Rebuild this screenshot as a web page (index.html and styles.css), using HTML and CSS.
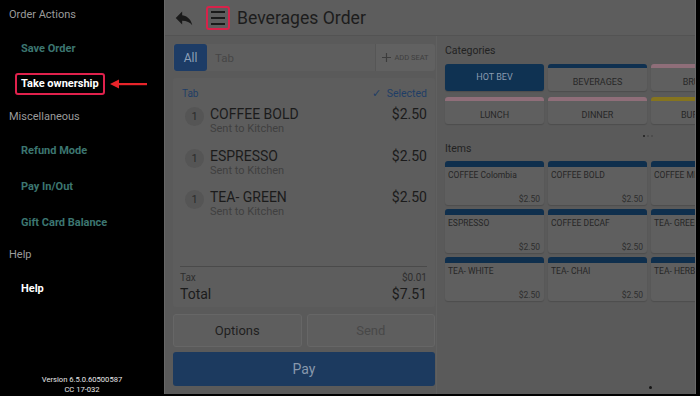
FILE: index.html
```html
<!DOCTYPE html>
<html>
<head>
<meta charset="utf-8">
<link rel="stylesheet" href="styles.css">
</head>
<body>
<div class="screen">
  <aside class="sidebar">
    <div class="sec">Order Actions</div>
    <div class="item teal">Save Order</div>
    <div class="item white">
      <span class="boxed">Take ownership</span>
      <svg class="arrow" width="37" height="10" viewBox="0 0 37 10"><path d="M0 5 L9 0.5 L9 9.5 Z" fill="#e8242a"/><rect x="8" y="4" width="29" height="2.2" fill="#e8242a"/></svg>
    </div>
    <div class="sec">Miscellaneous</div>
    <div class="item teal">Refund Mode</div>
    <div class="item teal">Pay In/Out</div>
    <div class="item teal">Gift Card Balance</div>
    <div class="sec">Help</div>
    <div class="item white">Help</div>
    <div class="version">Version 6.5.0.60500587<br>CC 17-032</div>
  </aside>
  <main class="main">
    <header class="topbar">
      <svg class="back" width="22" height="22" viewBox="0 0 24 24"><path d="M10 9V5l-7 7 7 7v-4.1c5 0 8.5 1.6 11 5.1-1-5-4-10-11-11z" fill="#1a1a1a"/></svg>
      <span class="menu"><span></span><span></span><span></span></span>
      <h1 class="title">Beverages Order</h1>
    </header>
    <div class="content">
      <section class="order">
        <div class="tabbar">
          <span class="all">All</span>
          <span class="tabname">Tab</span>
          <span class="addseat"><svg width="9" height="9" viewBox="0 0 10 10"><path d="M5 0v10M0 5h10" stroke="#3c3c3c" stroke-width="1.3"/></svg>ADD SEAT</span>
        </div>
        <div class="card">
          <div class="cardhead"><span>Tab</span><span class="sel">✓&nbsp;&nbsp;Selected</span></div>
          <div class="line"><span class="qty">1</span><div class="nm"><div class="n">COFFEE BOLD</div><div class="s">Sent to Kitchen</div></div><span class="pr">$2.50</span></div>
          <div class="line"><span class="qty">1</span><div class="nm"><div class="n">ESPRESSO</div><div class="s">Sent to Kitchen</div></div><span class="pr">$2.50</span></div>
          <div class="line"><span class="qty">1</span><div class="nm"><div class="n">TEA- GREEN</div><div class="s">Sent to Kitchen</div></div><span class="pr">$2.50</span></div>
          <div class="totals">
            <div class="tax"><span>Tax</span><span>$0.01</span></div>
            <div class="total"><span>Total</span><span>$7.51</span></div>
          </div>
        </div>
        <div class="btnrow">
          <span class="btn">Options</span>
          <span class="btn dis">Send</span>
        </div>
        <div class="pay">Pay</div>
      </section>
      <section class="menuside">
        <div class="lbl">Categories</div>
        <div class="cats">
          <div class="cat selcat">HOT BEV</div>
          <div class="cat navy">BEVERAGES</div>
          <div class="cat pink">BRUNCH</div>
          <div class="cat pink">LUNCH</div>
          <div class="cat pink">DINNER</div>
          <div class="cat yellow">BURGERS</div>
        </div>
        <div class="dots"><i class="on"></i><i></i><i></i></div>
        <div class="lbl">Items</div>
        <div class="items">
          <div class="it"><span>COFFEE Colombia</span><b>$2.50</b></div>
          <div class="it"><span>COFFEE BOLD</span><b>$2.50</b></div>
          <div class="it"><span>COFFEE MILD</span><b>$2.50</b></div>
          <div class="it"><span>ESPRESSO</span><b>$2.50</b></div>
          <div class="it"><span>COFFEE DECAF</span><b>$2.50</b></div>
          <div class="it"><span>TEA- GREEN</span><b>$2.50</b></div>
          <div class="it"><span>TEA- WHITE</span><b>$2.50</b></div>
          <div class="it"><span>TEA- CHAI</span><b>$2.50</b></div>
          <div class="it"><span>TEA- HERBAL</span><b>$2.50</b></div>
        </div>
        <div class="pagedot"></div>
      </section>
    </div>
  </main>
</div>
</body>
</html>
```

FILE: styles.css
```css
* { box-sizing: border-box; margin: 0; padding: 0; }
html, body { width: 700px; height: 396px; background: #000; overflow: hidden; }
body { font-family: Roboto, "Liberation Sans", sans-serif; }
.screen { display: flex; width: 700px; height: 396px; }

.sidebar { width: 164px; flex: none; display: flex; flex-direction: column; background: #000; }
.sec { height: 30px; line-height: 30px; padding-left: 9px; font-size: 11px; color: #9b9b9b; }
.item { height: 36px; display: flex; align-items: center; padding-left: 21px; font-size: 11px; font-weight: 700; }
.teal { color: #3c7670; }
.white { color: #fff; }
.item .boxed { margin-left: -6px; padding: 0 4px; height: 22px; line-height: 18px; border: 2px solid #e0214c; border-radius: 3px; }
.arrow { margin-left: 5px; }
.version { margin-top: auto; margin-bottom: 1px; text-align: center; font-size: 7.6px; line-height: 10px; color: #e8e8e8; }

.main { width: 532px; flex: none; height: 394px; background: #5a5a5a; border-left: 1px solid #686868; border-right: 1px solid #6a6a6a; overflow: hidden; display: flex; flex-direction: column; }
.topbar { height: 36px; flex: none; display: flex; align-items: center; background: #5d5d5d; border-bottom: 1px solid #535353; padding-left: 8px; }
.back { margin-right: 11px; }
.menu { width: 24px; height: 24px; border: 2px solid #d8224a; border-radius: 3px; display: flex; flex-direction: column; justify-content: center; align-items: center; gap: 4px; }
.menu span { display: block; width: 14px; height: 2px; background: #1a1a1a; }
.title { margin-left: 7px; font-size: 17.6px; font-weight: 400; color: #1c1c1c; }

.content { flex: 1; display: flex; min-height: 0; }
.order { width: 270px; flex: none; padding: 8px 0 0 8px; display: flex; flex-direction: column; }
.tabbar { height: 27px; display: flex; align-items: stretch; background: #5e5e5e; border-radius: 3px; }
.all { width: 33px; margin: 0 0 0 1px; background: #1d3c66; border-radius: 3px; color: #8ea0b8; font-size: 12px; display: flex; align-items: center; justify-content: center; }
.tabname { flex: 1; padding-left: 8px; display: flex; align-items: center; font-size: 11.5px; color: #464646; }
.addseat { width: 60px; display: flex; align-items: center; justify-content: center; gap: 3px; background: #616161; border-left: 1px solid #565656; border-radius: 0 3px 3px 0; font-size: 7.5px; color: #3e3e3e; }

.card { margin-top: 7px; height: 229px; background: #5d5d5d; border-radius: 3px; display: flex; flex-direction: column; padding: 0 8px 0 7px; }
.cardhead { height: 26px; display: flex; justify-content: space-between; align-items: center; padding: 4px 0 0 2px; font-size: 10px; color: #1f3e66; }
.sel { font-size: 10.5px; }
.line { height: 41.5px; display: flex; align-items: flex-start; padding-top: 2px; }
.qty { width: 19px; height: 19px; margin: 1px 6px 0 5px; border-radius: 50%; background: #555; color: #2a2a2a; font-size: 11px; display: flex; align-items: center; justify-content: center; }
.nm { flex: 1; }
.n { font-size: 14px; line-height: 17px; color: #1b1b1b; }
.s { font-size: 11px; line-height: 12px; color: #404040; }
.pr { font-size: 14px; line-height: 17px; color: #1b1b1b; }
.totals { margin-top: auto; border-top: 1px solid #4a4a4a; padding-bottom: 4px; }
.tax { display: flex; justify-content: space-between; font-size: 10px; color: #2e2e2e; padding-top: 5px; line-height: 12px; }
.total { display: flex; justify-content: space-between; font-size: 14px; color: #1b1b1b; line-height: 18px; padding-top: 1px; }

.btnrow { margin-top: 7px; display: flex; gap: 5px; }
.btn { flex: 1; height: 33px; border: 1px solid #666; border-radius: 3px; background: #5e5e5e; display: flex; align-items: center; justify-content: center; font-size: 13px; color: #1f1f1f; }
.btn.dis { color: #484848; }
.pay { margin-top: 5px; height: 34px; border-radius: 3px; background: #1c3a5f; color: #8898ac; font-size: 14px; display: flex; align-items: center; justify-content: center; }

.menuside { flex: 1; border-left: 1px solid #606060; margin-left: 1px; padding: 8px 0 0 8px; position: relative; }
.lbl { font-size: 10.5px; color: #222; line-height: 13px; }
.cats { display: grid; grid-template-columns: repeat(3, 99px); gap: 6px 4px; margin-top: 7px; width: 310px; }
.cat { height: 27px; background: #5f5f5f; border-radius: 3px; box-shadow: 0 1px 1px rgba(0,0,0,0.15); display: flex; align-items: center; justify-content: center; padding-top: 4px; font-size: 9px; color: #272727; white-space: nowrap; overflow: hidden; }
.navy { border-top: 4px solid #0f3050; }
.pink { border-top: 4px solid #8f6e79; }
.yellow { border-top: 4px solid #85741f; }
.selcat { background: #0f3252; color: #8a9bb0; padding-top: 0; padding-bottom: 2px; }
.dots { display: flex; gap: 2px; padding-left: 198px; margin: 10px 0 4px; height: 4px; align-items: center; }
.dots i { width: 2px; height: 2px; border-radius: 50%; background: #4a4a4a; }
.dots i.on { background: #1e1e1e; }
.items { display: grid; grid-template-columns: repeat(3, 99px); gap: 4px 4px; margin-top: 6px; width: 310px; }
.it { height: 44px; background: #5f5f5f; border-top: 6px solid #0f2f4d; border-radius: 3px; box-shadow: 0 1px 1px rgba(0,0,0,0.15); display: flex; flex-direction: column; justify-content: space-between; padding: 3px 4px 1px 3px; font-size: 8.5px; color: #262626; white-space: nowrap; overflow: hidden; }
.it b { font-weight: 400; align-self: flex-end; color: #2e2e2e; font-size: 8.5px; }
.pagedot { position: absolute; left: 212px; bottom: 5px; width: 3px; height: 3px; border-radius: 50%; background: #151515; }
```
